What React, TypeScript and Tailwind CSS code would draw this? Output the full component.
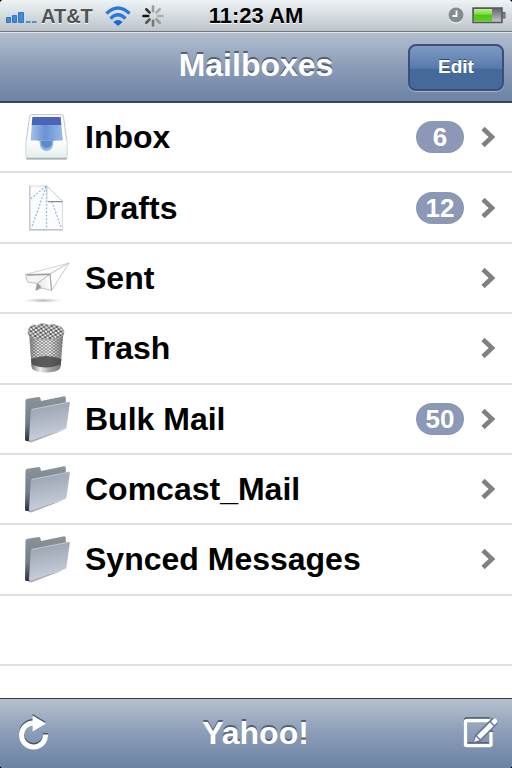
import type { ReactNode } from 'react';

type Mailbox = {
  name: string;
  icon: ReactNode;
  count?: number;
};

function InboxIcon() {
  return (
    <svg viewBox="0 0 48 48" className="size-12" aria-hidden="true">
      <defs>
        <linearGradient id="inbox-well" x1="0" y1="0" x2="1" y2="0">
          <stop offset="0" stopColor="#a3c2ea" />
          <stop offset=".45" stopColor="#6892d2" />
          <stop offset="1" stopColor="#98bae6" />
        </linearGradient>
        <linearGradient id="inbox-front" x1="0" y1="0" x2="0" y2="1">
          <stop offset="0" stopColor="#fff" />
          <stop offset="1" stopColor="#e3ecec" />
        </linearGradient>
      </defs>
      <path d="M4 45h41v2H4z" fill="#666" opacity=".25" />
      <path d="M7.500 3.500q.3-2 2-2h30q1.700 0 2 2L45 29v15q0 2-2 2H6q-2 0-2-2V29z" fill="#f4f8fa" stroke="#b4bcc3" strokeWidth=".8" />
      <path d="M10.500 4h28l2.500 24H8.500z" fill="url(#inbox-well)" />
      <path d="M10.500 4h28l1 8h-30z" fill="#4a65b8" />
      <path d="M39 4h1.500L43 28h-2zM10 4H8.500L6 28h2z" fill="#fff" />
      <path d="M4.500 27.500H16q1.500 0 1.700 2.500 1 8 6.800 8t6.800-8q.2-2.500 1.700-2.500h11.500V43.500q0 2-2 2H6.500q-2 0-2-2z" fill="url(#inbox-front)" />
      <path d="M17.500 27.500h14q0 10.500-7 10.500t-7-10.500z" fill="#8fb3e2" />
      <path d="M19 28h11q0 7-5.500 7T19 28z" fill="#5f89cb" />
      <path d="M5 45.300h39.500" stroke="#999ea1" strokeWidth="1" />
    </svg>
  );
}

function DraftsIcon() {
  return (
    <svg viewBox="0 0 48 48" className="size-12" aria-hidden="true">
      <path d="M7.500 2h17L40.500 17v28.500h-33z" fill="#fbfcfe" stroke="#d4d7db" strokeWidth=".9" />
      <path d="M8 2v43" stroke="#b6babf" strokeWidth=".9" />
      <path d="M7 46h34" stroke="#999" strokeWidth="1.200" opacity=".7" />
      <path
        d="M24.500 2v43M24 2 8 15.500M24 3 9.500 44M25 4l14 39"
        fill="none"
        stroke="#94b5e2"
        strokeWidth="1.300"
        strokeDasharray="1.800 1.800"
      />
      <path d="M25 2v15.500h15.500z" fill="#fff" stroke="#c3c6ca" strokeWidth=".8" />
      <path d="M26 17.700h14.500" stroke="#8d9196" strokeWidth="1.200" />
    </svg>
  );
}

function SentIcon() {
  return (
    <svg viewBox="0 0 48 50" className="h-[50px] w-12" aria-hidden="true">
      <defs>
        <radialGradient id="sent-shadow">
          <stop offset="0" stopColor="#aaa" stopOpacity=".9" />
          <stop offset="1" stopColor="#ccc" stopOpacity="0" />
        </radialGradient>
        <linearGradient id="sent-body" x1="0" y1="0" x2="1" y2="0">
          <stop offset="0" stopColor="#e2e2e2" />
          <stop offset="1" stopColor="#fff" />
        </linearGradient>
      </defs>
      <ellipse cx="21" cy="47.500" rx="20" ry="2.500" fill="url(#sent-shadow)" />
      <path d="M47 10 3.500 21.500 28 21z" fill="#fdfdfd" stroke="#c8c8c8" strokeWidth=".8" />
      <path d="M47 10 28 21l1.500 16.500z" fill="#fff" stroke="#bdbdbd" strokeWidth=".8" />
      <path d="M28 21 15 30.500l-1 6.500 6-2 9.500 2.500z" fill="url(#sent-body)" stroke="#b4b4b4" strokeWidth=".8" />
      <path d="m3.500 21.500 24.500-.5-13 9.500L5.500 29z" fill="#f4f4f4" stroke="#b0b0b0" strokeWidth=".8" />
      <path d="M5 22.200 28 21.500" stroke="#8e8e8e" strokeWidth="1" />
      <path d="m15.500 30-2 8 6-4z" fill="#9a9a9a" />
      <path d="m28 21 1.500 16" stroke="#a2a2a2" strokeWidth=".9" />
    </svg>
  );
}

function TrashIcon() {
  return (
    <svg viewBox="0 0 48 52" className="h-[52px] w-12" aria-hidden="true">
      <defs>
        <pattern id="trash-mesh" width="4" height="3" patternUnits="userSpaceOnUse">
          <path d="m0 0 2 1.500L4 0M0 3l2-1.500L4 3" fill="none" stroke="#555" strokeWidth=".6" />
        </pattern>
        <pattern id="trash-rim" width="5" height="4" patternUnits="userSpaceOnUse" patternTransform="rotate(8)">
          <path d="m0 0 2.500 2L5 0M0 4l2.500-2L5 4" fill="none" stroke="#2e2e2e" strokeWidth=".9" />
        </pattern>
        <linearGradient id="trash-side" x1="0" x2="1">
          <stop offset="0" stopColor="#8a8a8a" />
          <stop offset=".25" stopColor="#e4e4e4" />
          <stop offset=".6" stopColor="#f4f4f4" />
          <stop offset="1" stopColor="#8a8a8a" />
        </linearGradient>
        <linearGradient id="trash-base" x1="0" x2="1">
          <stop offset="0" stopColor="#777" />
          <stop offset=".3" stopColor="#eee" />
          <stop offset=".6" stopColor="#aaa" />
          <stop offset="1" stopColor="#777" />
        </linearGradient>
      </defs>
      <path d="m7 9 2.500 36q14.500 6 29 0L41.500 9z" fill="url(#trash-side)" />
      <path d="M9 37q15-6 30.500 0l-1 7q-14 6-28.500 0z" fill="#2c2c2c" opacity=".75" />
      <path d="m7 9 2.500 36q14.500 6 29 0L41.500 9z" fill="url(#trash-mesh)" />
      <path d="M6 11q0-7 6-8 2 0 3 1 3-3.500 8-2 3 .5 4 1.500 4-2.500 7 0 8 1 8 7.500 0 6-18 6.500Q6 17 6 11z" fill="#eee" />
      <path d="M6 11q0-7 6-8 2 0 3 1 3-3.500 8-2 3 .5 4 1.500 4-2.500 7 0 8 1 8 7.500 0 6-18 6.500Q6 17 6 11z" fill="url(#trash-rim)" stroke="#999" strokeWidth=".7" />
      <path d="M9.500 42.500q14.500 6 29 0l-.5 4q-3 4-14 4t-14-4z" fill="url(#trash-base)" />
    </svg>
  );
}

function FolderIcon() {
  return (
    <svg viewBox="0 0 48 48" className="size-12" aria-hidden="true">
      <defs>
        <linearGradient id="folder-front" x1=".2" y1="0" x2=".4" y2="1">
          <stop offset="0" stopColor="#97a0ad" />
          <stop offset=".5" stopColor="#b0b8c5" />
          <stop offset="1" stopColor="#cad1de" />
        </linearGradient>
        <linearGradient id="folder-back" x1="0" y1="0" x2="0" y2="1">
          <stop offset="0" stopColor="#8b949b" />
          <stop offset=".6" stopColor="#727c85" />
          <stop offset="1" stopColor="#2d3138" />
        </linearGradient>
      </defs>
      <path d="M3 45.500 42 35l-33 12.500z" fill="#444" opacity=".45" />
      <path d="M3.500 6q0-1.800 2-2.200l11-1.800q1.800-.2 2 1.500l.5 2.500L42 1.200q1.800-.2 1.800 1.500V33L6 46q-3 .5-3-1.500z" fill="url(#folder-back)" />
      <path d="m10.500 13.800 35.800-7q1.700-.2 1.500 1.500L44.500 32q-.3 1.800-2 2.300L8.500 45.800q-1.500.2-1.500-1.500l1.800-28.500q.2-1.700 1.700-2z" fill="url(#folder-front)" />
      <path d="m9.500 14.500 37-7.200" stroke="#c0c7d1" strokeWidth=".9" />
    </svg>
  );
}

function Chevron() {
  return (
    <svg viewBox="0 0 16 22" className="h-[22px] w-4 shrink-0" aria-hidden="true">
      <path d="m3 2.500 9 8.500-9 8.500" fill="none" stroke="#808080" strokeWidth="4.600" />
    </svg>
  );
}

function SignalIcon() {
  return (
    <svg viewBox="0 0 31 14" className="h-3.5 w-[31px]" aria-hidden="true">
      <g fill="#3c8be0" stroke="#2467b8" strokeWidth=".8">
        <path d="M.5 8.500h4v5h-4zM6.500 6.500h4v7h-4zM12.500 3.500h5v10h-5z" />
      </g>
      <path d="M20 13h4.500M26 13h4.500" stroke="#2d73c4" strokeWidth="1.600" />
    </svg>
  );
}

function WifiIcon() {
  return (
    <svg viewBox="0 0 26 20" className="h-5 w-[26px]" aria-hidden="true">
      <g fill="none" stroke="#2a78dc" strokeWidth="3.300">
        <path d="M1.500 7.500q11.500-11 23 0" />
        <path d="M5.500 12.500q7.500-7.500 15 0" />
      </g>
      <path d="M8.300 16q4.700-4 9.400 0L13 20z" fill="#1768d8" />
    </svg>
  );
}

// clockwise from twelve o'clock
const spokes = ['#999', '#aaa', '#b0b0b0', '#999', '#777', '#555', '#111', '#333'];

function Spinner() {
  return (
    <svg viewBox="-12 -12 24 24" className="size-6" aria-hidden="true">
      {spokes.map((color, i) => (
        <path key={i} d="M0-4.800v-4.700" stroke={color} strokeWidth="2.600" strokeLinecap="round" transform={`rotate(${i * 45})`} />
      ))}
    </svg>
  );
}

function ClockIcon() {
  return (
    <svg viewBox="0 0 16 17" className="h-[17px] w-4" aria-hidden="true">
      <circle cx="8" cy="9" r="7.500" fill="#fff" />
      <circle cx="8" cy="8" r="7.500" fill="#858b8e" />
      <path d="M8.500 3.500V9H4.500" fill="none" stroke="#fff" strokeWidth="1.800" />
    </svg>
  );
}

function BatteryIcon() {
  return (
    <svg viewBox="0 0 34 17" className="h-[17px] w-[34px]" aria-hidden="true">
      <defs>
        <linearGradient id="battery-fill" x1="0" y1="0" x2="0" y2="1">
          <stop offset="0" stopColor="#baf08b" />
          <stop offset=".4" stopColor="#82dc43" />
          <stop offset=".5" stopColor="#4dc710" />
          <stop offset="1" stopColor="#63cc2b" />
        </linearGradient>
        <linearGradient id="battery-empty" x1="0" y1="0" x2="0" y2="1">
          <stop offset="0" stopColor="#62606a" />
          <stop offset="1" stopColor="#c9c8cf" />
        </linearGradient>
      </defs>
      <path d="M1 1h29v14.500H1z" fill="url(#battery-empty)" stroke="#54555e" strokeWidth="1.500" />
      <path d="M2 2h18v12.500H2z" fill="url(#battery-fill)" />
      <path d="M31 5.500h2v5.500h-2z" fill="#aaa" stroke="#54555e" />
    </svg>
  );
}

function RefreshIcon() {
  const arc = 'M27.500 19.500a12 12 0 1 1-12-11.500';
  const head = 'M14.500.5 28 8.500l-13.500 8z';
  return (
    <svg viewBox="0 0 30 36" className="h-9 w-[30px] overflow-visible" aria-hidden="true">
      <g transform="translate(0 -1.500)">
        <path d={arc} fill="none" stroke="#46536a" strokeWidth="5" />
        <path d={head} fill="#46536a" />
      </g>
      <path d={arc} fill="none" stroke="#fff" strokeWidth="5" />
      <path d={head} fill="#fff" />
    </svg>
  );
}

function ComposeIcon() {
  const sheet = 'M27 4.500H4q-1.500 0-1.500 1.500v22q0 1.500 1.500 1.500h22.500q1.500 0 1.500-1.500V16';
  return (
    <svg viewBox="0 0 35 34" className="h-[34px] w-[35px]" aria-hidden="true">
      <path d={sheet} fill="none" stroke="#46536a" strokeWidth="3.500" transform="translate(0 -1.500)" />
      <path d={sheet} fill="none" stroke="#fff" strokeWidth="3.500" />
      <path d="M29.500 1.500 12 19l-2.500 8.500 8-2L35 7.500z" fill="#66789a" />
      <path d="m28 5.500 2.500-2.500q1.500-1 3 .5t.5 3l-2.500 2.500zM27 6.500l3.500 3.500-13 13-3.500-3.500zM13 20.500l3.500 3.500-5.500 2z" fill="#fff" />
    </svg>
  );
}

const mailboxes: Mailbox[] = [
  { name: 'Inbox', icon: <InboxIcon />, count: 6 },
  { name: 'Drafts', icon: <DraftsIcon />, count: 12 },
  { name: 'Sent', icon: <SentIcon /> },
  { name: 'Trash', icon: <TrashIcon /> },
  { name: 'Bulk Mail', icon: <FolderIcon />, count: 50 },
  { name: 'Comcast_Mail', icon: <FolderIcon /> },
  { name: 'Synced Messages', icon: <FolderIcon /> },
];

function StatusBar() {
  return (
    <div className="grid h-8 grid-cols-[1fr_auto_1fr] items-center border-b border-[#70777c] bg-linear-to-b from-[#eef3f5] to-[#bdc5ca] px-1.5">
      <div className="flex items-center gap-1">
        <SignalIcon />
        <span className="text-[20px] leading-6 font-bold text-[#505254] [text-shadow:0_1px_0_#fff]">AT&amp;T</span>
        <span className="ml-2 flex items-center gap-2.5">
          <WifiIcon />
          <Spinner />
        </span>
      </div>
      <span className="text-[22px] leading-6 font-bold text-black [text-shadow:0_1px_0_#fff]">11:23 AM</span>
      <div className="flex items-center justify-end gap-2">
        <ClockIcon />
        <BatteryIcon />
      </div>
    </div>
  );
}

function MailboxRow({ name, icon, count }: Mailbox) {
  return (
    <li className="flex h-[70px] shrink-0 grow border-b-2 border-[#e0e0e0]">
      <a href="#" className="flex flex-1 items-center pr-4 pl-[22px] text-black">
        {icon}
        <span className="ml-[15px] flex-1 text-[32px] leading-9 font-bold">{name}</span>
        {count !== undefined && (
          <span className="mr-4 flex h-8 min-w-12 items-center justify-center rounded-full bg-[#8b98b6] px-2 text-[26px] leading-8 font-bold text-white">
            {count}
          </span>
        )}
        <Chevron />
      </a>
    </li>
  );
}

export default function App() {
  return (
    <div className="bg-black font-['Liberation_Sans',Arial,sans-serif]">
      <div className="flex min-h-screen flex-col overflow-hidden rounded-[4px] bg-white">
        <StatusBar />

        <header className="grid h-[71px] grid-cols-[1fr_auto_1fr] items-center border-t border-b-2 border-t-[#dbe3e9] border-b-[#37445b] bg-linear-to-b from-[#b2bfcf] via-[#8a9cb6] to-[#6d83a5] px-2">
          <h1 className="col-start-2 pb-1 text-[32px] leading-9 font-bold text-white [text-shadow:0_-2px_0_#536077]">Mailboxes</h1>
          <button
            type="button"
            className="h-[47px] w-24 justify-self-end rounded-lg border-2 border-[#3a5079] bg-linear-to-b from-[#7f9bc5] from-0% via-[#5a7bae] via-50% to-[#46699c] to-55% text-[19px] leading-6 font-bold text-white shadow-[0_1px_0_#a5b5ca] [text-shadow:0_-1px_0_#364a6c]"
          >
            Edit
          </button>
        </header>

        <main className="flex flex-1 flex-col">
          <ul className="flex flex-1 flex-col">
            {mailboxes.map((mailbox) => (
              <MailboxRow key={mailbox.name} {...mailbox} />
            ))}
            <li className="h-[70px] shrink-0 grow border-b-2 border-[#e0e0e0]" />
            <li className="h-8" />
          </ul>
        </main>

        <footer className="flex h-[70px] items-center justify-between border-t border-[#2e3946] bg-linear-to-b from-[#b6c1ce] via-[#8a9cb6] to-[#6d83a5] pr-3.5 pb-0.5 pl-[18px]">
          <button type="button" aria-label="Refresh">
            <RefreshIcon />
          </button>
          <h2 className="text-[32px] leading-9 font-bold text-white [text-shadow:0_-2px_0_#536077]">Yahoo!</h2>
          <button type="button" aria-label="Compose">
            <ComposeIcon />
          </button>
        </footer>
      </div>
    </div>
  );
}
